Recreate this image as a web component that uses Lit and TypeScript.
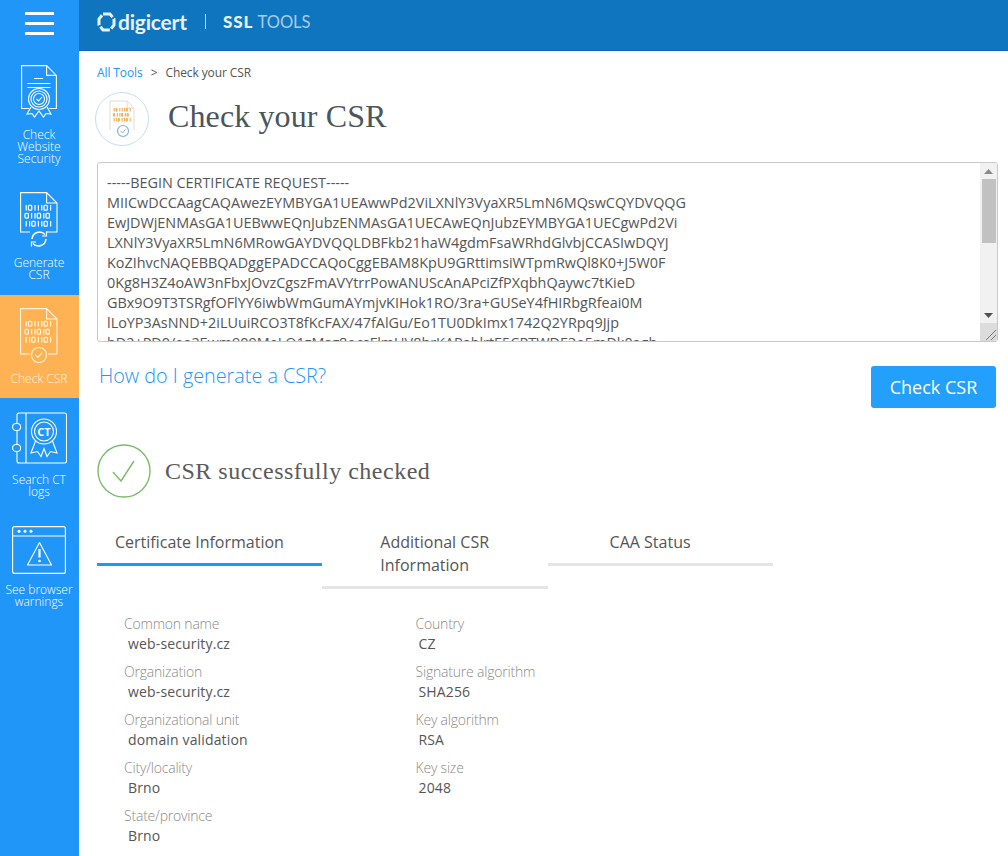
import { LitElement, html, css, svg } from "lit";
import { customElement } from "lit/decorators.js";

const bits = (x: number, y: number, rowGap = 8, h = 5.5, one = 3.4, zero = 5.4) => svg`
  <g fill="none" stroke="currentColor" stroke-width="1.2" transform="translate(${x} ${y})">
    ${["1011101", "011010", "1101101"].map((row, r) => {
      let cx = 0;
      return [...row].map((c) => {
        const at = cx;
        cx += c === "1" ? one : zero;
        return c === "1"
          ? svg`<line x1=${at + one / 2} x2=${at + one / 2} y1=${r * rowGap} y2=${r * rowGap + h}></line>`
          : svg`<rect x=${at + 0.5} y=${r * rowGap + 0.3} width=${zero - 2} height=${h - 0.6} rx="1"></rect>`;
      });
    })}
  </g>`;

const websiteIcon = html`<svg width="36" height="54" viewBox="0 0 36 54" fill="none" stroke="currentColor" stroke-width="1.1">
  <path d="M8 43.5H0.6V0.6h25l9.8 9.8v33.1H28M25.6 0.6v9.8h9.8"></path>
  <path d="M13 13.5h9M6.5 18.5h23M6.5 22.5h23"></path>
  <circle cx="18" cy="34" r="10.5"></circle><circle cx="18" cy="34" r="8"></circle><circle cx="18" cy="34" r="5.5"></circle>
  <path d="M15.5 34l2 2 3.5-4"></path>
  <path d="M10 42l-4 7 5-.5 2.5 3.5 4.5-6 4.5 6 2.5-3.5 5 .5-4-7"></path>
</svg>`;

const generateIcon = html`<svg width="38" height="56" viewBox="0 0 38 56" fill="none" stroke="currentColor" stroke-width="1.1">
  <path d="M10 40H0.6V0.6h26l10.4 10.4V40H26M26.6 0.6V11H37"></path>
  ${bits(4.5, 13)}
  <path d="M12 47a7.5 7.5 0 0 1 13-4.500" stroke-width="1.6"></path>
  <path d="M26.500 39.500v4.500h-4.500" stroke-width="1.2"></path>
  <path d="M26 47a7.5 7.5 0 0 1-13 4.500" stroke-width="1.6"></path>
  <path d="M11.500 54.500v-4.500h4.500" stroke-width="1.2"></path>
</svg>`;

const checkIcon = html`<svg width="38" height="56" viewBox="0 0 38 56" fill="none" stroke="currentColor" stroke-width="1.1">
  <path d="M10 46H0.6V0.6h26l10.4 10.4V46H28M26.6 0.6V11H37"></path>
  ${bits(4.5, 13)}
  <circle cx="19" cy="47" r="7.500"></circle>
  <path d="M15.500 47l2.500 2.500 4-5"></path>
</svg>`;

const logsIcon = html`<svg width="55" height="52" viewBox="0 0 55 52" fill="none" stroke="currentColor" stroke-width="1.1">
  <path d="M5 11.500V3a2 2 0 0 1 2-2h45.500a2 2 0 0 1 2 2v46a2 2 0 0 1-2 2H7a2 2 0 0 1-2-2V39.500M5 18.500v14"></path>
  <path d="M14 1v50"></path>
  <rect x="0.600" y="11.500" width="8" height="7" rx="3.500"></rect>
  <rect x="0.600" y="32.500" width="8" height="7" rx="3.500"></rect>
  <circle cx="32" cy="19.500" r="12.500"></circle><circle cx="32" cy="19.500" r="9.500"></circle>
  <path d="M23.500 29L19 41l6.500-1.500 3.500 5 3-8 3 8 3.500-5 6.500 1.500-4.500-12"></path>
  <text x="32" y="23.500" text-anchor="middle" font-family="Open Sans, sans-serif" font-size="11" font-weight="700" fill="currentColor" stroke="none">CT</text>
</svg>`;

const warnIcon = html`<svg width="54" height="48" viewBox="0 0 54 48" fill="none" stroke="currentColor" stroke-width="1.1">
  <rect x="0.600" y="0.600" width="52.800" height="46.800" rx="2"></rect>
  <path d="M1 10h52"></path>
  <circle cx="7" cy="5.200" r="1.500" fill="currentColor" stroke="none"></circle>
  <circle cx="13" cy="5.200" r="1.500" fill="currentColor" stroke="none"></circle>
  <circle cx="19" cy="5.200" r="1.500" fill="currentColor" stroke="none"></circle>
  <path d="M27.500 16.500l12 22.500h-24z" stroke-linejoin="round"></path>
  <path d="M27.500 23v8.500" stroke-width="2.200"></path><circle cx="27.500" cy="35" r="1.300" fill="currentColor" stroke="none"></circle>
</svg>`;

const csrLines = [
  "-----BEGIN CERTIFICATE REQUEST-----",
  "MIICwDCCAagCAQAwezEYMBYGA1UEAwwPd2ViLXNlY3VyaXR5LmN6MQswCQYDVQQG",
  "EwJDWjENMAsGA1UEBwwEQnJubzENMAsGA1UECAwEQnJubzEYMBYGA1UECgwPd2Vi",
  "LXNlY3VyaXR5LmN6MRowGAYDVQQLDBFkb21haW4gdmFsaWRhdGlvbjCCASIwDQYJ",
  "KoZIhvcNAQEBBQADggEPADCCAQoCggEBAM8KpU9GRttimsiWTpmRwQl8K0+J5W0F",
  "0Kg8H3Z4oAW3nFbxJOvzCgszFmAVYtrrPowANUScAnAPciZfPXqbhQaywc7tKieD",
  "GBx9O9T3TSRgfOFlYY6iwbWmGumAYmjvKIHok1RO/3ra+GUSeY4fHIRbgRfeai0M",
  "lLoYP3AsNND+2iLUuiRCO3T8fKcFAX/47fAlGu/Eo1TU0DkImx1742Q2YRpq9Jjp",
  "bD2+PD0/ea2Ewm909MeLO1zMsg8ocsFlmUV8hrKAPablrtE5CRTWDE3o5mDk0agh",
];

const leftDetails = [
  ["Common name", "web-security.cz"],
  ["Organization", "web-security.cz"],
  ["Organizational unit", "domain validation"],
  ["City/locality", "Brno"],
  ["State/province", "Brno"],
];
const rightDetails = [
  ["Country", "CZ"],
  ["Signature algorithm", "SHA256"],
  ["Key algorithm", "RSA"],
  ["Key size", "2048"],
];

@customElement("app-root")
export class AppRoot extends LitElement {
  static styles = css`
    :host { display: block; width: 1008px; height: 856px; overflow: hidden; font-family: "Open Sans", sans-serif; color: #555; background: #fff; }
    .page { display: flex; height: 856px; }
    .side { width: 79px; flex: none; background: #2196f9; color: #fff; display: flex; flex-direction: column; }
    .burger { height: 51px; display: flex; flex-direction: column; gap: 7px; align-items: center; padding: 12px 1px 0 0; box-sizing: border-box; }
    .burger i { display: block; width: 29px; height: 3px; background: #fff; }
    .nav { display: flex; flex-direction: column; align-items: center; text-align: center; font-size: 12px; font-weight: 300; line-height: 12px; box-sizing: border-box; padding-right: 1px; }
    .nav span { display: block; }
    .nav.website { height: 128px; padding-top: 14px; gap: 10px; }
    .nav.website span { padding: 0 8px; }
    .nav.generate { height: 116px; padding-top: 13px; gap: 9px; }
    .nav.check { height: 103px; background: #ffb253; color: #fff3e0; padding-top: 13px; gap: 9px; }
    .nav.logs { height: 113px; padding-top: 14px; gap: 10px; }
    .nav.warn { padding-top: 15px; gap: 10px; }
    .main { flex: 1; min-width: 0; }
    .top { height: 51px; background: #0f75bf; box-sizing: border-box; border-bottom: 1px solid #0d68ab; display: flex; align-items: center; padding: 0 0 7px 18px; color: #e6f1f9; }
    .brand { font-family: "Lato", sans-serif; font-size: 21px; font-weight: 700; letter-spacing: -0.2px; margin-left: 2px; }
    .sep { width: 1px; height: 15px; background: #b9d6ec; margin: 0 17px 0 18px; }
    .ssl { font-family: "Lato", sans-serif; font-size: 17px; font-weight: 900; letter-spacing: 1px; }
    .tools { font-family: "Lato", sans-serif; font-size: 16.500px; color: #a9cde8; margin-left: 4px; }
    .content { padding: 14px 10px 0 18px; }
    .crumbs { font-size: 12px; line-height: 16px; letter-spacing: -0.1px; display: flex; gap: 8px; color: #555; }
    .crumbs a { color: #2196f9; }
    .title { display: flex; align-items: center; gap: 19px; margin: 10px 0 0 -2px; height: 56px; }
    .badge { width: 54px; height: 54px; border: 1px solid #c5deef; border-radius: 50%; box-sizing: border-box; display: flex; align-items: center; justify-content: center; }
    h1 { margin: 0 0 6px; font-family: "Liberation Serif", serif; font-weight: 400; font-size: 32px; letter-spacing: 0.120px; color: #4a555c; }
    .box { margin-top: 15px; height: 180px; width: 901px; box-sizing: border-box; border: 1px solid #c8c8c8; border-radius: 3px; display: flex; overflow: hidden; }
    .text { flex: 1; min-width: 0; padding: 10px 9px 0; font-size: 14.400px; line-height: 20px; color: #555; white-space: nowrap; overflow: hidden; }
    .bar { width: 17px; flex: none; background: #f1f1f1; display: flex; flex-direction: column; align-items: center; }
    .arrow { height: 16px; width: 100%; display: flex; align-items: center; justify-content: center; }
    .arrow svg { display: block; }
    .thumb { align-self: stretch; margin: 0 1px 0 2px; height: 64px; background: #c1c1c1; }
    .spacer { flex: 1; }
    .grip { height: 18px; width: 100%; background: #dcdcdc; display: block; }
    .actions { display: flex; justify-content: space-between; align-items: flex-start; height: 66px; }
    .actions a { color: #2196f9; font-size: 19.800px; font-weight: 300; margin: 22px 0 0 2px; line-height: 24px; }
    button { margin-top: 24px; width: 125px; height: 42px; border: 0; border-radius: 3px; background: #22a0fb; color: #fff; font: 400 18px "Open Sans", sans-serif; margin-right: 2px; padding: 0; }
    .ok { display: flex; align-items: center; gap: 14px; margin-top: 36px; height: 54px; }
    .ok h2 { margin: 0; font-family: "Liberation Serif", serif; font-weight: 400; font-size: 24px; letter-spacing: 0.500px; color: #5a5a5a; }
    .tabs { display: flex; margin-top: 33px; align-items: flex-start; }
    .tab { width: 225.300px; box-sizing: border-box; font-size: 16px; line-height: 23px; color: #555; padding: 0 0 9px; border-bottom: 3px solid #e4e4e4; }
    .tab.active { border-bottom-color: #2196f9; padding-left: 18px; }
    .tab.second { padding-left: 58px; }
    .tab.third { padding-left: 62px; }
    .details { display: flex; margin: 23px 0 0 27px; }
    .col { width: 291.500px; }
    .item { height: 48px; }
    .label { font-size: 14px; font-weight: 300; line-height: 24px; letter-spacing: -0.2px; color: #8a8a8a; display: block; }
    .value { font-size: 14px; line-height: 20px; letter-spacing: 0.150px; color: #555; display: block; margin: -2px 0 0 4px; }
    .col:last-child .value { margin-left: 3px; }
  `;

  render() {
    return html`<div class="page">
      <aside class="side">
        <div class="burger"><i></i><i></i><i></i></div>
        <div class="nav website">${websiteIcon}<span>Check Website Security</span></div>
        <div class="nav generate">${generateIcon}<span>Generate<br />CSR</span></div>
        <div class="nav check">${checkIcon}<span>Check CSR</span></div>
        <div class="nav logs">${logsIcon}<span>Search CT<br />logs</span></div>
        <div class="nav warn">${warnIcon}<span>See browser<br />warnings</span></div>
      </aside>
      <div class="main">
        <header class="top">
          <svg width="19" height="20" viewBox="0 0 19 20" fill="none" stroke="currentColor" stroke-width="3">
            <path d="M6 2h7l4 5v6l-4 5H6L2 13V7z" stroke-dasharray="11 2"></path>
          </svg>
          <span class="brand">digicert</span><span class="sep"></span>
          <span class="ssl">SSL</span><span class="tools">TOOLS</span>
        </header>
        <div class="content">
          <div class="crumbs"><a>All Tools</a><span>&gt;</span><span>Check your CSR</span></div>
          <div class="title">
            <div class="badge">
              <svg width="26" height="38" viewBox="0 0 26 38" fill="none">
                <path d="M1 30V1h17l7 7v22" stroke="#dcdcdc"></path>
                <path d="M18 1v7h7" stroke="#dcdcdc"></path>
                <g color="#f4b35e">${bits(4, 8, 5, 3.5, 2.400, 3.200)}</g>
                <circle cx="14" cy="31" r="5.500" fill="#fff" stroke="#7fb3d8" stroke-width="1.200"></circle>
                <path d="M11.500 31l2 2 3-3.500" stroke="#7fb3d8"></path>
              </svg>
            </div>
            <h1>Check your CSR</h1>
          </div>
          <div class="box">
            <div class="text">${csrLines.map((l) => html`<div>${l}</div>`)}</div>
            <div class="bar">
              <div class="arrow"><svg width="9" height="5"><path d="M0 5L4.500 0 9 5z" fill="#8a8a8a"></path></svg></div>
              <div class="thumb"></div>
              <div class="spacer"></div>
              <div class="arrow"><svg width="9" height="5"><path d="M0 0L4.500 5 9 0z" fill="#505050"></path></svg></div>
              <svg class="grip" viewBox="0 0 17 18"><path d="M6 17L16 7M11 17l5-5" stroke="#777" fill="none"></path></svg>
            </div>
          </div>
          <div class="actions"><a>How do I generate a CSR?</a><button>Check CSR</button></div>
          <div class="ok">
            <svg width="54" height="54" viewBox="0 0 54 54" fill="none" stroke="#7dbb6c">
              <circle cx="27" cy="27" r="26" stroke-width="1.400"></circle>
              <path d="M16 28l8 9 13-20" stroke-width="1.400"></path>
            </svg>
            <h2>CSR successfully checked</h2>
          </div>
          <div class="tabs">
            <div class="tab active">Certificate Information</div>
            <div class="tab second">Additional CSR<br />Information</div>
            <div class="tab third">CAA Status</div>
          </div>
          <div class="details">
            ${[leftDetails, rightDetails].map(
              (col) => html`<div class="col">
                ${col.map(([k, v]) => html`<div class="item"><span class="label">${k}</span><span class="value">${v}</span></div>`)}
              </div>`
            )}
          </div>
        </div>
      </div>
    </div>`;
  }
}
